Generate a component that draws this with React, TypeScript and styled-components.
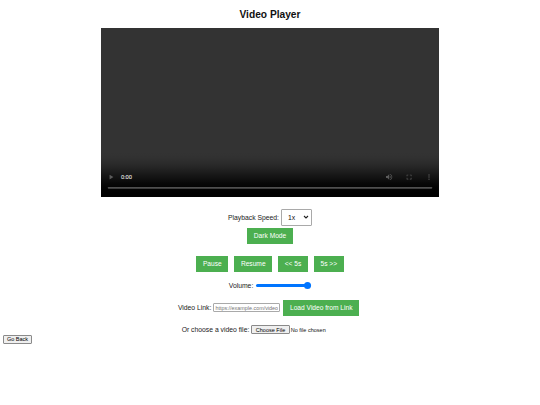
import * as React from 'react'
import styled, { createGlobalStyle } from 'styled-components'

const GlobalStyle = createGlobalStyle`
  body {
    margin: 0;
    background: #fff;
    color: #000;
    font-family: "Liberation Sans", Arial, sans-serif;
  }
`

const Page = styled.div`
  padding: 0 3px;
`

const Title = styled.h2`
  margin: 0;
  padding: 9px 0 7px;
  font-size: 10.2px;
  line-height: 12px;
  font-weight: bold;
  text-align: center;
  color: #111;
`

const VideoFrame = styled.div`
  width: 338px;
  height: 169px;
  margin: 0 auto;
  overflow: hidden;
`

const Video = styled.video`
  display: block;
  width: 814px;
  height: 407px;
  background: #333;
  transform: scale(0.4152);
  transform-origin: 0 0;
`

const Row = styled.div<{ $top: number; $gap?: number; $height?: number }>`
  display: flex;
  justify-content: center;
  align-items: center;
  margin-top: ${(p) => p.$top}px;
  gap: ${(p) => p.$gap ?? 0}px;
  height: ${(p) => p.$height ?? 16}px;
  font-size: 6.8px;
  color: #222;
`

const LinkRow = styled(Row)`
  padding-right: 3px;
`

const SpeedSelect = styled.select`
  appearance: none;
  width: 31px;
  height: 17px;
  padding: 0 0 0 6px;
  font-family: inherit;
  font-size: 6.8px;
  color: #111;
  border: 1px solid #a9a9a9;
  border-radius: 1px;
  background: #fff url("data:image/svg+xml,%3Csvg xmlns='http://www.w3.org/2000/svg' width='6' height='4'%3E%3Cpath d='M1 1l2 2 2-2' fill='none' stroke='%23222' stroke-width='1.1'/%3E%3C/svg%3E") no-repeat right 2px center;
`

const GreenButton = styled.button`
  height: 16px;
  padding: 0 6.6px;
  margin: 0;
  border: 0;
  background: #4caf50;
  color: #fff;
  font-family: inherit;
  font-size: 6.64px;
  white-space: nowrap;
`

const VolumeSlider = styled.input`
  appearance: none;
  width: 55px;
  height: 8px;
  margin: 0;
  background: transparent;

  &::-webkit-slider-runnable-track {
    height: 3px;
    border-radius: 2px;
    background: #0075ff;
  }

  &::-webkit-slider-thumb {
    appearance: none;
    width: 7px;
    height: 7px;
    margin-top: -2px;
    border-radius: 50%;
    background: #0075ff;
  }
`

const LinkInput = styled.input`
  box-sizing: border-box;
  width: 67px;
  height: 9px;
  padding: 0 1px;
  margin: 0 3px 0 2px;
  font-family: inherit;
  font-size: 5.4px;
  border: 1px solid #a9a9a9;
  border-radius: 1px;

  &::placeholder {
    color: #757575;
  }
`

const FilePicker = styled.input`
  width: 107px;
  margin-left: 2px;
  font-family: inherit;
  font-size: 5.53px;
  color: #111;

  &::file-selector-button {
    height: 9px;
    padding: 0 3.5px;
    margin-right: 1px;
    font-family: inherit;
    font-size: 5.53px;
    color: #000;
    background: #efefef;
    border: 1px solid #8a8a8a;
    border-radius: 1px;
  }
`

const BackButton = styled.button`
  display: block;
  box-sizing: border-box;
  width: 29px;
  height: 9px;
  padding: 0;
  margin-top: 0;
  font-family: inherit;
  font-size: 5.53px;
  color: #000;
  background: #efefef;
  border: 1px solid #8a8a8a;
  border-radius: 1px;
`

export default function App() {
  return (
    <Page>
      <GlobalStyle />
      <Title>Video Player</Title>
      <VideoFrame>
        <Video controls />
      </VideoFrame>
      <Row $top={11.5} $gap={2} $height={17}>
        <label>Playback Speed:</label>
        <SpeedSelect defaultValue="1">
          <option value="0.5">0.5x</option>
          <option value="1">1x</option>
          <option value="1.5">1.5x</option>
          <option value="2">2x</option>
        </SpeedSelect>
      </Row>
      <Row $top={2}>
        <GreenButton>Dark Mode</GreenButton>
      </Row>
      <Row $top={12} $gap={6}>
        <GreenButton>Pause</GreenButton>
        <GreenButton>Resume</GreenButton>
        <GreenButton>&lt;&lt; 5s</GreenButton>
        <GreenButton>5s &gt;&gt;</GreenButton>
      </Row>
      <Row $top={8} $gap={3} $height={12}>
        <label>Volume:</label>
        <VolumeSlider type="range" min="0" max="1" step="0.01" defaultValue="1" />
      </Row>
      <LinkRow $top={8}>
        <label>Video Link:</label>
        <LinkInput type="text" placeholder="https://example.com/video.mp4" />
        <GreenButton>Load Video from Link</GreenButton>
      </LinkRow>
      <Row $top={9} $height={10}>
        <label>Or choose a video file:</label>
        <FilePicker type="file" accept="video/*" />
      </Row>
      <BackButton>Go Back</BackButton>
    </Page>
  )
}
